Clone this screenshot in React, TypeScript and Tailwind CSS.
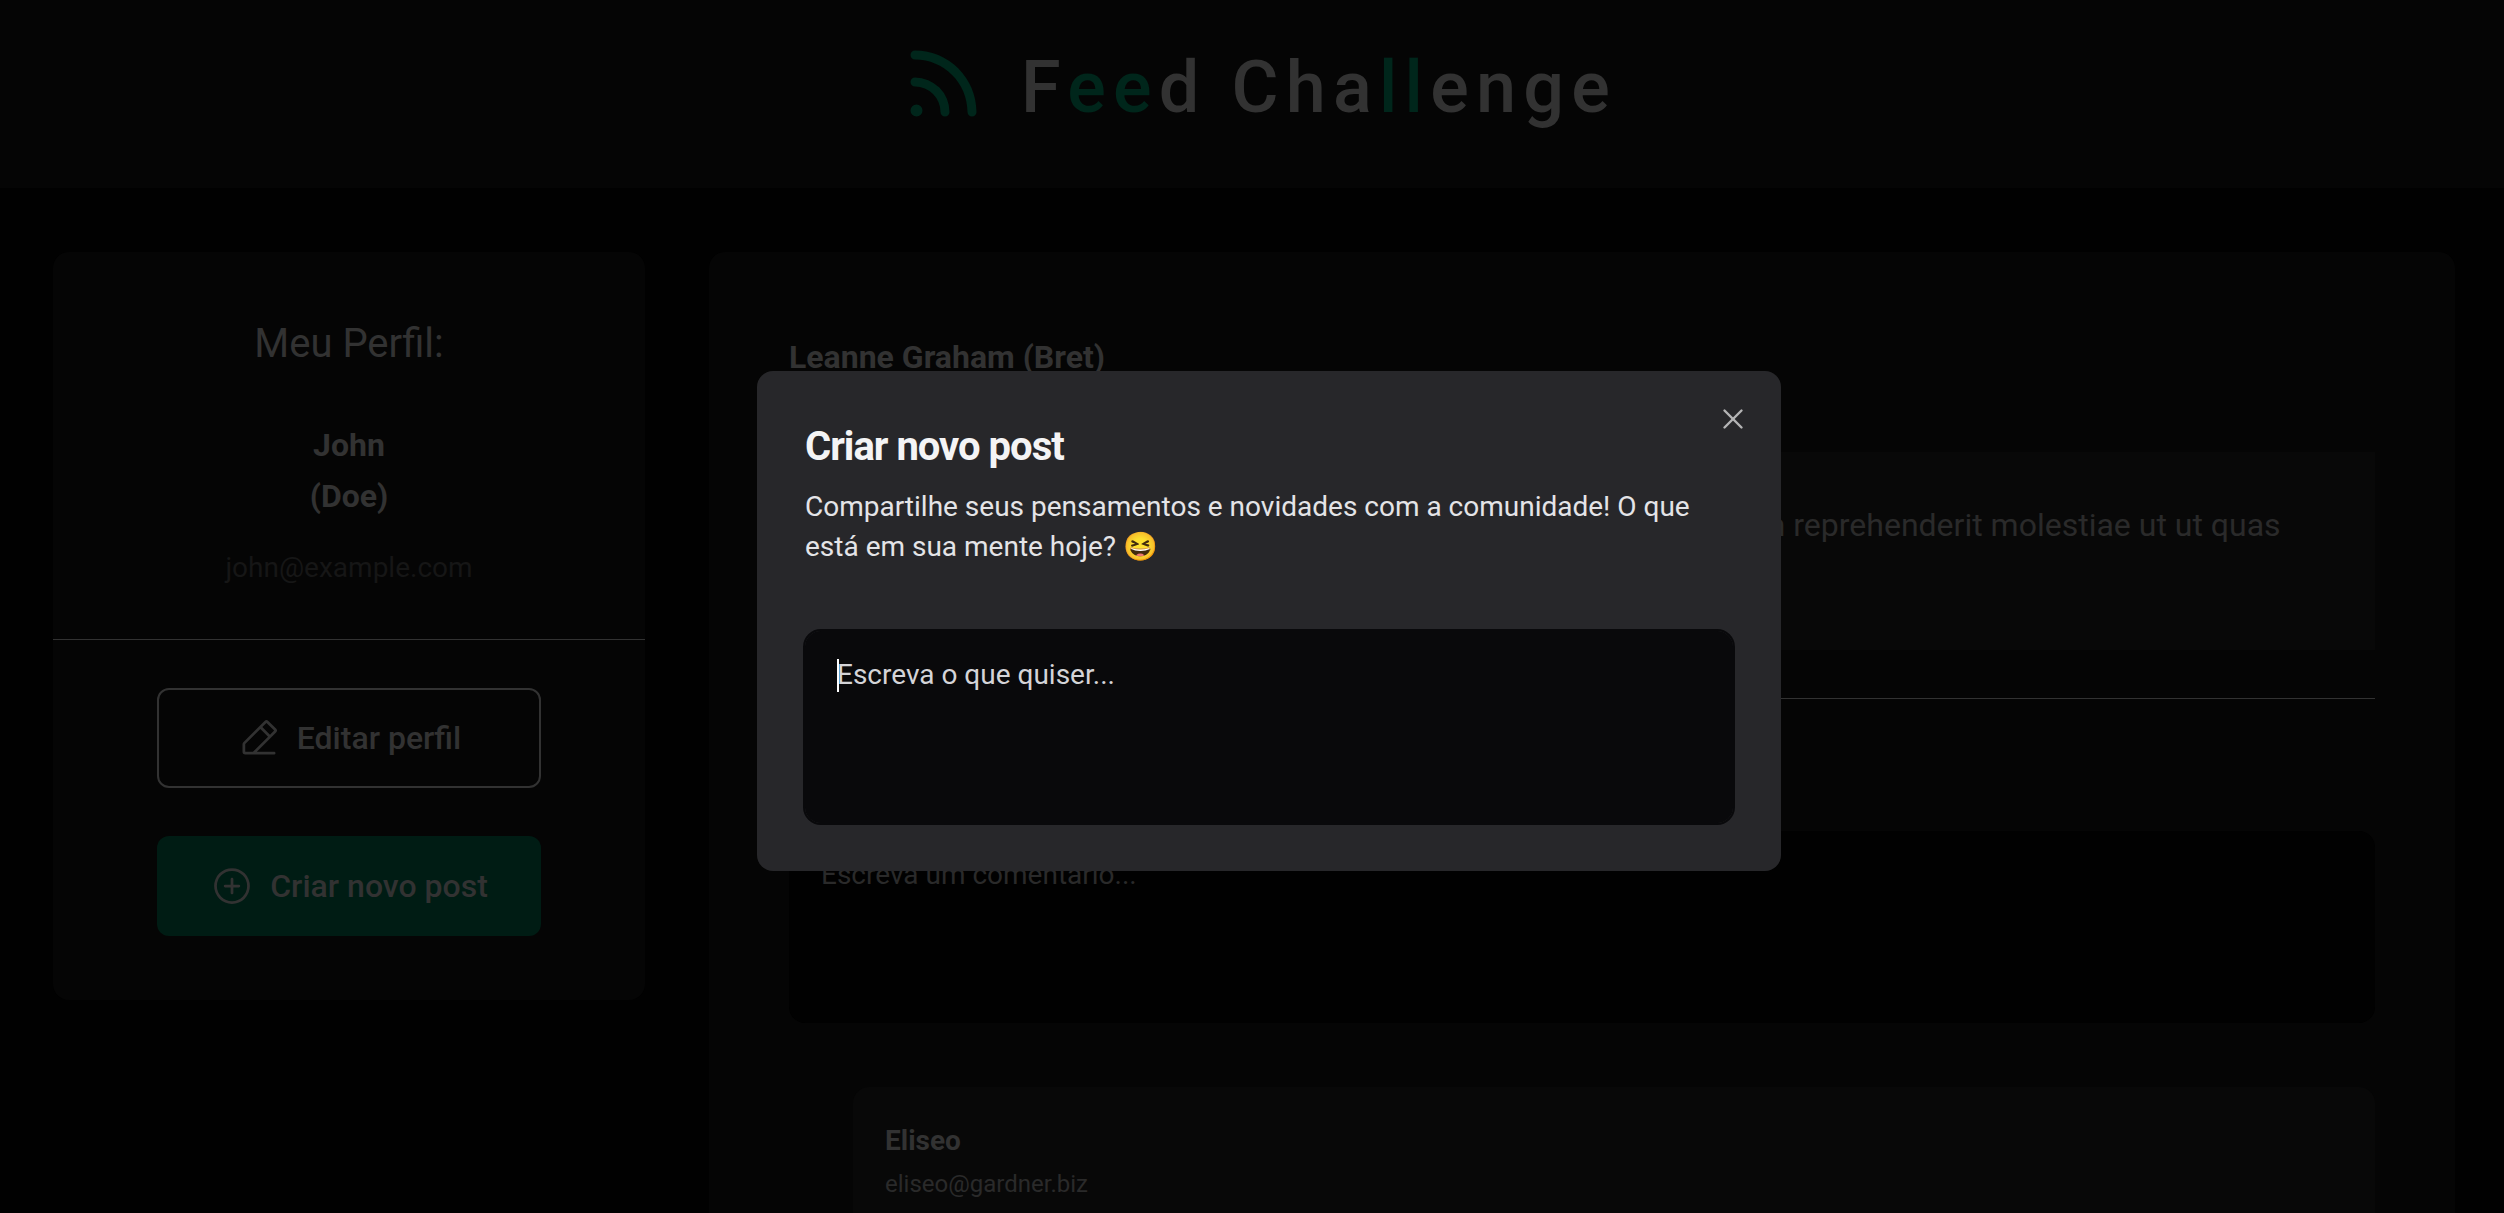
import React, { useId } from 'react';
import { X } from 'lucide-react';
import { PiRssSimpleBold, PiPencilSimpleLine, PiPlusCircle } from 'react-icons/pi';

function Header() {
  return (
    <header className="flex h-[188px] items-start justify-center gap-[34px] bg-[#050505] pt-10 pl-1">
      <PiRssSimpleBold className="size-24 text-[#00261b]" aria-hidden="true" />
      <h1 className="text-[72px] leading-[96px] font-medium tracking-widest text-[#323232]">
        F<span className="text-[#00261b]">ee</span>d Cha<span className="text-[#00261b]">ll</span>enge
      </h1>
    </header>
  );
}

function Profile() {
  return (
    <aside className="w-[592px] shrink-0 rounded-2xl bg-[#050505] pb-16">
      <div className="flex flex-col items-center border-b border-[#323232] pt-16 pb-[50px] text-center">
        <h2 className="text-[40px] leading-[56px] text-[#323232]">Meu Perfil:</h2>
        <p className="mt-12 text-[32px] leading-[51px] font-bold text-[#323232]">
          John
          <br />
          (Doe)
        </p>
        <p className="mt-[25px] text-[28px] leading-[42px] text-[#161616]">john@example.com</p>
      </div>
      <div className="flex flex-col items-center gap-12 pt-12 text-[32px] font-medium text-[#323232]">
        <button type="button" className="flex h-[100px] w-[384px] items-center justify-center gap-4 rounded-xl border-2 border-[#323232]">
          <PiPencilSimpleLine className="size-11" aria-hidden="true" />
          Editar perfil
        </button>
        <button type="button" className="flex h-[100px] w-[384px] items-center justify-center gap-4 rounded-xl bg-[#001c14]">
          <PiPlusCircle className="size-11" aria-hidden="true" />
          Criar novo post
        </button>
      </div>
    </aside>
  );
}

function Post() {
  const commentId = useId();
  return (
    <article className="min-w-0 flex-1 rounded-t-2xl bg-[#050505] px-20 pt-20">
      <h3 className="text-[32px] leading-[51px] font-bold text-[#323232]">Leanne Graham (Bret)</h3>
      <p className="mt-[69px] bg-[#080808] p-12 text-[32px] leading-[51px] text-[#2a2a2a]">
        quia et suscipit suscipit recusandae consequuntur expedita et cum reprehenderit molestiae ut ut quas totam
        nostrum rerum est autem sunt rem eveniet architecto
      </p>
      <form className="mt-12 border-t border-[#323232] pt-12">
        <label htmlFor={commentId} className="block text-[32px] leading-[51px] font-bold text-[#323232]">
          Deixe seu comentário
        </label>
        <textarea
          id={commentId}
          placeholder="Escreva um comentário..."
          className="mt-[33px] block h-48 w-full resize-none rounded-2xl bg-[#010101] px-8 py-6 text-[28px] leading-10 placeholder:text-[#2a2a2a]"
        />
      </form>
      <section className="mt-16 ml-16 h-80 rounded-2xl bg-[#080808] px-8 pt-8">
        <h4 className="text-[28px] leading-[43px] font-bold text-[#323232]">Eliseo</h4>
        <p className="text-[24px] leading-[44px] text-[#2a2a2a]">eliseo@gardner.biz</p>
      </section>
    </article>
  );
}

function NewPostDialog() {
  const titleId = useId();
  return (
    <div className="fixed inset-0 flex items-center justify-center pt-[29px] pl-[34px]">
      <section role="dialog" aria-modal="true" aria-labelledby={titleId} className="relative w-[1024px] rounded-2xl bg-[#27272a] px-12 pt-12 pb-12">
        <h2 id={titleId} className="text-[40px] leading-[56px] font-bold tracking-tight text-zinc-100">
          Criar novo post
        </h2>
        <p className="mt-3 text-[28px] leading-10 text-zinc-200">
          Compartilhe seus pensamentos e novidades com a comunidade! O que está em sua mente hoje? 😆
        </p>
        <div className="relative mt-16">
          <textarea
            aria-label="Escreva o que quiser"
            placeholder="Escreva o que quiser..."
            className="block h-48 w-full resize-none rounded-2xl bg-[#09090b] px-8 py-6 text-[28px] leading-10 text-zinc-100 outline-2 outline-[#09090b] placeholder:text-zinc-300"
          />
          <span className="absolute top-7 left-8 h-[33px] w-0.5 bg-white" />
        </div>
        <button type="button" aria-label="Fechar" className="absolute top-8 right-8 flex size-8 items-center justify-center text-[#b4b4b5]">
          <X className="size-[34px] shrink-0" strokeWidth={1.7} aria-hidden="true" />
        </button>
      </section>
    </div>
  );
}

export default function App() {
  return (
    <div className="h-screen overflow-hidden bg-[#010101] font-[Roboto,sans-serif]">
      <Header />
      <main className="flex items-start gap-16 pt-16 pr-[49px] pl-[53px]">
        <Profile />
        <Post />
      </main>
      <NewPostDialog />
    </div>
  );
}
